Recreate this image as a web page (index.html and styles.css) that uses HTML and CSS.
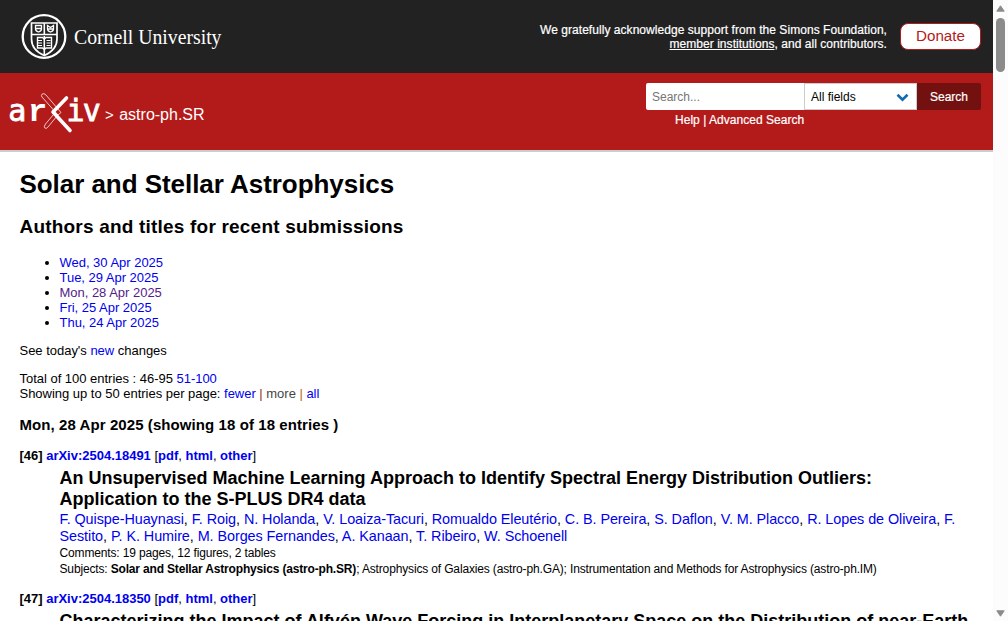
FILE: index.html
```html
<!DOCTYPE html>
<html lang="en">
<head>
<meta charset="utf-8">
<title>Solar and Stellar Astrophysics</title>
<link rel="stylesheet" href="styles.css">
</head>
<body>
<div class="page">
  <header>
    <div class="cornell-bar">
      <a class="cornell">
        <svg class="seal" width="46" height="46" viewBox="0 0 46 46" fill="none" stroke="#fff">
          <circle cx="23" cy="22.5" r="21.3" stroke-width="2.3"/>
          <path d="M10.5 9H36V25C36 33 31 38 23.3 41.5C15 38 10.5 33 10.5 25Z" stroke-width="1.7"/>
          <path d="M10 20.5H36M23.3 9V20M23.3 22V41" stroke-width="1.6"/>
          <path d="M14.5 11.5H20.5V15Q20.5 17 17.5 18Q14.5 17 14.5 15ZM26.5 11.5L29.5 13.5L32.5 11.5V15Q32.5 17 29.5 18Q26.5 17 26.5 15ZM14 14.5H20M26 15H32" stroke-width="1.3"/>
          <path d="M16.5 23.5H21.5L23.3 25L25 23.5H30.5V34H25L23.3 35.5L21.5 34H16.5Z" stroke-width="1.4"/>
          <path d="M17 26.5H21M17 29H21M17 31.5H21M25.5 26.5H29.5M25.5 29H29.5M25.5 31.5H29.5" stroke-width="1.1"/>
        </svg>
        <svg class="wordmark" width="150" height="30" viewBox="0 0 150 30"><text x="0" y="21.7" textLength="147.5" lengthAdjust="spacingAndGlyphs">Cornell University</text></svg>
      </a>
      <div class="support">
        <p>We gratefully acknowledge support from the Simons Foundation,<br><a>member institutions</a>, and all contributors.</p>
        <a class="donate">Donate</a>
      </div>
    </div>
    <div class="arxiv-bar">
      <div class="brand">
        <svg class="arxiv-logo" width="91" height="42" viewBox="0 0 91 42">
          <text y="29"><tspan x="-1.8">a</tspan><tspan x="18" class="slab">r</tspan></text>
          <text y="29"><tspan x="56.5">i</tspan><tspan x="72.7">v</tspan></text>
          <path d="M32 2.2Q34 .6 36 3L51 20.5L48 23L32 5Q30.8 3.5 32 2.2ZM47 24L38 35Q36 37.3 34.8 36Q33.5 34.7 35.5 32L43.5 22.5" class="thin"/>
          <path d="M56.5 6L43 20L60 38.5" class="thick"/>
        </svg>
        <span class="crumb"><i>&gt;</i> astro-ph.SR</span>
      </div>
      <div class="search">
        <div class="search-row">
          <span class="field">Search...</span>
          <span class="select">All fields<svg width="13" height="9" viewBox="0 0 13 9"><path d="M1.5 1.8L6.5 6.6L11.5 1.8" fill="none" stroke="#0f6cb0" stroke-width="2.7"/></svg></span>
          <span class="go">Search</span>
        </div>
        <p class="help">Help | Advanced Search</p>
      </div>
    </div>
  </header>
  <main>
    <h1>Solar and Stellar Astrophysics</h1>
    <h2>Authors and titles for recent submissions</h2>
    <ul>
      <li><a>Wed, 30 Apr 2025</a></li>
      <li><a>Tue, 29 Apr 2025</a></li>
      <li><a class="visited">Mon, 28 Apr 2025</a></li>
      <li><a>Fri, 25 Apr 2025</a></li>
      <li><a>Thu, 24 Apr 2025</a></li>
    </ul>
    <p class="note">See today's <a>new</a> changes</p>
    <p class="paging">Total of 100 entries : 46-95 <a>51-100</a></p>
    <p class="morefewer">Showing up to 50 entries per page: <a>fewer</a> <b class="bar">|</b> <span class="off">more</span> <b class="bar alt">|</b> <a>all</a></p>
    <h3>Mon, 28 Apr 2025 (showing 18 of 18 entries )</h3>
    <dl>
      <dt>[46] <a>arXiv:2504.18491</a> <span>[<a>pdf</a>, <a>html</a>, <a>other</a>]</span></dt>
      <dd>
        <h4>An Unsupervised Machine Learning Approach to Identify Spectral Energy Distribution Outliers:<br>Application to the S-PLUS DR4 data</h4>
        <p class="authors"><a>F. Quispe-Huaynasi</a>, <a>F. Roig</a>, <a>N. Holanda</a>, <a>V. Loaiza-Tacuri</a>, <a>Romualdo Eleutério</a>, <a>C. B. Pereira</a>, <a>S. Daflon</a>, <a>V. M. Placco</a>, <a>R. Lopes de Oliveira</a>, <a>F.<br>Sestito</a>, <a>P. K. Humire</a>, <a>M. Borges Fernandes</a>, <a>A. Kanaan</a>, <a>T. Ribeiro</a>, <a>W. Schoenell</a></p>
        <p class="meta">Comments: 19 pages, 12 figures, 2 tables</p>
        <p class="meta">Subjects: <b>Solar and Stellar Astrophysics (astro-ph.SR)</b>; Astrophysics of Galaxies (astro-ph.GA); Instrumentation and Methods for Astrophysics (astro-ph.IM)</p>
      </dd>
      <dt>[47] <a>arXiv:2504.18350</a> <span>[<a>pdf</a>, <a>html</a>, <a>other</a>]</span></dt>
      <dd>
        <h4>Characterizing the Impact of Alfvén Wave Forcing in Interplanetary Space on the Distribution of near-Earth</h4>
      </dd>
    </dl>
  </main>
</div>
<aside class="scrollbar">
  <svg width="9" height="7" viewBox="0 0 9 7"><path d="M4.5 .8L8.2 6.2H.8Z" fill="#8b8b8b" stroke="#8b8b8b" stroke-linejoin="round"/></svg>
  <span class="thumb"></span>
  <svg class="down" width="9" height="7" viewBox="0 0 9 7"><path d="M4.5 6.2L8.2 .8H.8Z" fill="#8b8b8b" stroke="#8b8b8b" stroke-linejoin="round"/></svg>
</aside>
</body>
</html>
```
FILE: styles.css
```css
* { box-sizing: border-box; }
body, h1, h2, h3, h4, p, ul, dl, dd { margin: 0; padding: 0; }
body {
  display: flex;
  width: 1008px;
  height: 621px;
  overflow: hidden;
  background: #fff;
  color: #000;
  font: 13px/15px "Liberation Sans", Arial, sans-serif;
}
.page { width: 993px; height: 621px; overflow: hidden; white-space: nowrap; }
.cornell-bar {
  display: flex;
  justify-content: space-between;
  height: 73px;
  padding: 14px 12px 0 21px;
  background: #222;
  color: #fff;
}
.cornell { display: flex; gap: 7px; }
.seal { display: block; }
.wordmark { margin-top: 8px; overflow: visible; }
.wordmark text { font: 21px "Liberation Serif", serif; fill: #fff; }
.support { display: flex; gap: 13px; padding-top: 9px; text-align: right; }
.support p { font-size: 12px; line-height: 14px; letter-spacing: .05px; -webkit-text-stroke: .2px #fff; }
.support p a { color: #fff; text-decoration: underline; }
.donate {
  width: 81px;
  height: 27px;
  border: 1px solid #b31b1b;
  border-radius: 8px;
  background: #fff;
  color: #b31b1b;
  font-size: 15.2px;
  line-height: 24px;
  text-align: center;
}
.arxiv-bar {
  display: flex;
  justify-content: space-between;
  height: 79px;
  padding: 10px 12px 0 10px;
  border-bottom: 2px solid #ccc;
  background: #b31b1b;
  color: #fff;
}
.brand { display: flex; gap: 4px; padding-top: 9px; }
.arxiv-logo { display: block; overflow: visible; }
.arxiv-logo text { font: 30px "DejaVu Sans Mono", monospace; fill: #fff; stroke: #fff; stroke-width: .8; }
.arxiv-logo .slab { font: bold 32px "Liberation Mono", monospace; stroke: none; }
.thin { fill: none; stroke: #efc5c5; stroke-width: 1; }
.thick { fill: none; stroke: #fff; stroke-width: 3.6; stroke-linecap: round; stroke-linejoin: round; }
.crumb { padding-top: 14px; font-size: 16px; line-height: 18px; }
.crumb i { margin-right: 1px; font-style: normal; font-size: 15px; }
.search { width: 335px; }
.search-row { display: flex; height: 27px; font-size: 12px; line-height: 27px; }
.field { width: 158px; padding: 1px 0 0 6px; background: #fff; color: #757575; border-radius: 2px 0 0 2px; }
.select {
  display: flex;
  align-items: center;
  justify-content: space-between;
  width: 113px;
  padding: 1px 7px 0 6px;
  border: 1px solid #ccc;
  background: #fff;
  color: #000;
}
.go { width: 64px; background: #731111; text-align: center; border-radius: 0 2px 2px 0; padding-top: 1px; -webkit-text-stroke: .2px #fff; }
.help { padding: 3px 0 0 29px; font-size: 12px; letter-spacing: .03px; -webkit-text-stroke: .2px #fff; }
main { padding: 17px 0 0 19.5px; letter-spacing: -.02px; }
main a { color: #0000ee; }
main a.visited { color: #551a8b; }
h1 { font-size: 26px; line-height: 30px; letter-spacing: -.05px; }
h2 { margin-top: 17px; font-size: 19px; line-height: 22px; letter-spacing: .2px; }
ul { margin-top: 17px; padding-left: 40px; }
.note { margin-top: 13px; }
.paging { margin-top: 13px; }
.off { color: #454545; }
.bar { color: #912c18; font-weight: normal; }
.bar.alt { color: #b06c13; }
h3 { margin-top: 15px; font-size: 15px; line-height: 18px; letter-spacing: .08px; }
dl { margin-top: 14px; }
dt { font-weight: bold; letter-spacing: -.01px; }
dt span { font-weight: normal; }
dt a { font-weight: bold; }
dd { padding: 5px 0 14px 40px; }
h4 { font-size: 18px; line-height: 21px; letter-spacing: 0; }
.authors { padding-top: 1px; font-size: 14.4px; line-height: 17px; letter-spacing: -.068px; }
.meta { font-size: 12px; line-height: 16px; letter-spacing: -.15px; }
.meta b { letter-spacing: -.17px; }
.scrollbar { display: flex; flex-direction: column; align-items: center; width: 15px; padding: 5px 0 4px; background: #fcfcfc; }
.thumb { width: 9px; height: 54px; margin-top: 6px; border-radius: 5px; background: #8b8b8b; }
.down { margin-top: auto; }
```
